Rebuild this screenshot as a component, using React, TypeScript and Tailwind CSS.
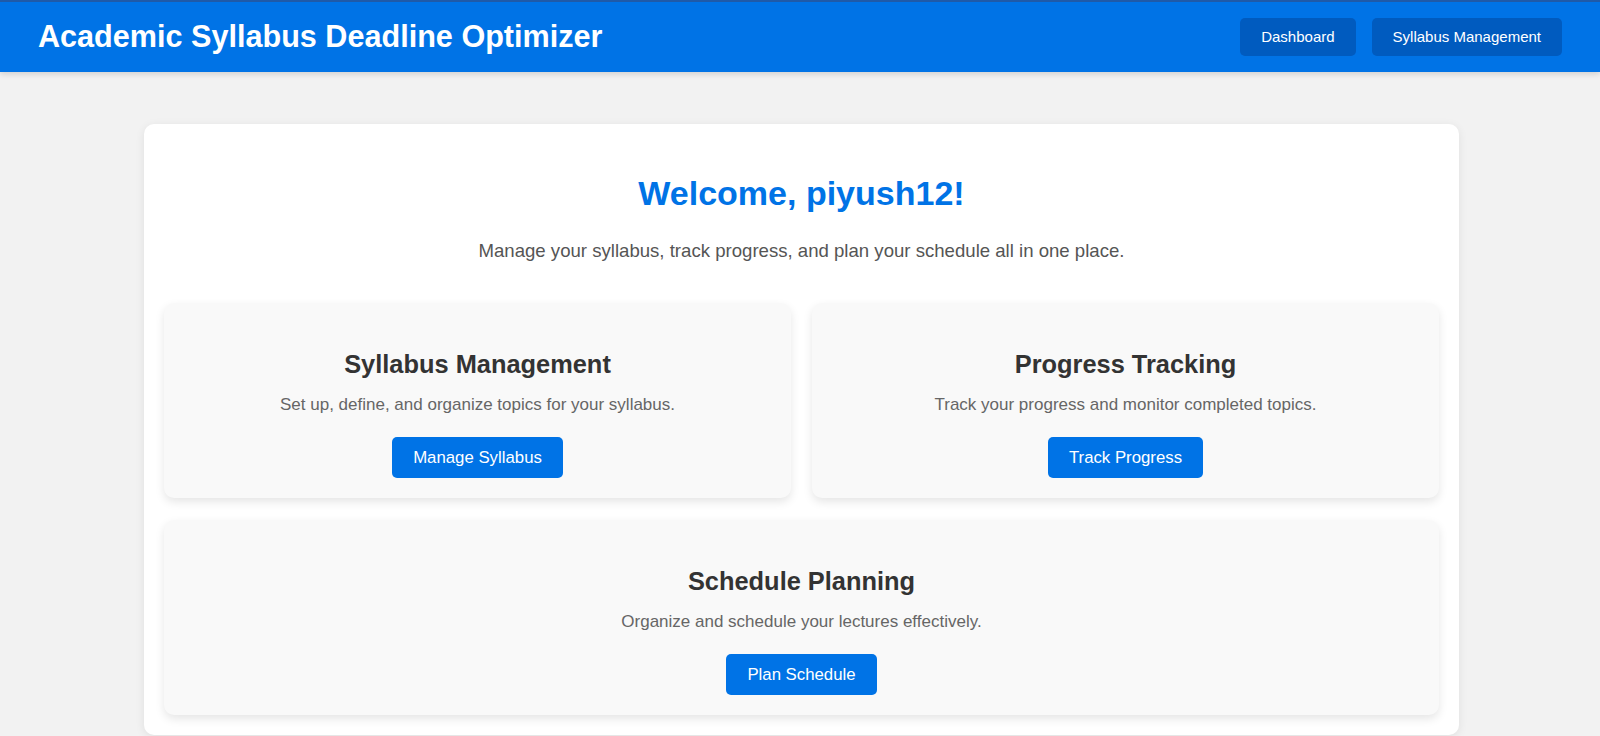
const features = [
  {
    title: "Syllabus Management",
    text: "Set up, define, and organize topics for your syllabus.",
    action: "Manage Syllabus",
  },
  {
    title: "Progress Tracking",
    text: "Track your progress and monitor completed topics.",
    action: "Track Progress",
  },
]

export default function App() {
  return (
    <div className="min-h-screen bg-[#f2f2f2] font-['Liberation_Sans',Arial,sans-serif]">
      <header className="h-[72px] bg-[#0073e6] border-t-2 border-[#1f5aa8] shadow-[0_2px_6px_rgba(0,0,0,0.15)] px-[38px] flex items-center justify-between">
        <h1 className="text-white text-[30.6px] font-bold">Academic Syllabus Deadline Optimizer</h1>
        <nav className="flex gap-4">
          <NavButton label="Dashboard" />
          <NavButton label="Syllabus Management" />
        </nav>
      </header>

      <main className="pt-[52px] pl-[3px]">
        <div className="w-[1315px] mx-auto bg-white rounded-[10px] shadow-[0_2px_10px_rgba(0,0,0,0.08)] px-5 pt-[50px] pb-5">
          <h2 className="text-center text-[#0073e6] text-[34px] leading-[38px] font-bold">Welcome, piyush12!</h2>
          <p className="text-center text-[#555] text-[18.6px] leading-[21px] mt-[28px]">
            Manage your syllabus, track progress, and plan your schedule all in one place.
          </p>

          <div className="mt-[42px] grid grid-cols-2 gap-x-[21px] gap-y-[22px]">
            {features.map((f) => (
              <FeatureCard key={f.title} {...f} />
            ))}
            <div className="col-span-2">
              <FeatureCard
                title="Schedule Planning"
                text="Organize and schedule your lectures effectively."
                action="Plan Schedule"
              />
            </div>
          </div>
        </div>
      </main>
    </div>
  )
}

function NavButton({ label }: { label: string }) {
  return (
    <button className="h-[38px] px-[21px] rounded-[5px] bg-[#005bbf] text-white text-[15px]">
      {label}
    </button>
  )
}

function FeatureCard({ title, text, action }: { title: string; text: string; action: string }) {
  return (
    <div className="bg-[#f9f9f9] rounded-[10px] shadow-[0_4px_10px_rgba(0,0,0,0.1)] pt-[47px] pb-5 flex flex-col items-center">
      <h3 className="text-[#333] text-[25.4px] leading-[29px] font-bold">{title}</h3>
      <p className="text-[#666] text-[17px] leading-[19px] mt-[16px]">{text}</p>
      <button className="mt-[23px] h-[41px] px-[21px] rounded-[5px] bg-[#0073e6] text-white text-[16.8px]">
        {action}
      </button>
    </div>
  )
}
